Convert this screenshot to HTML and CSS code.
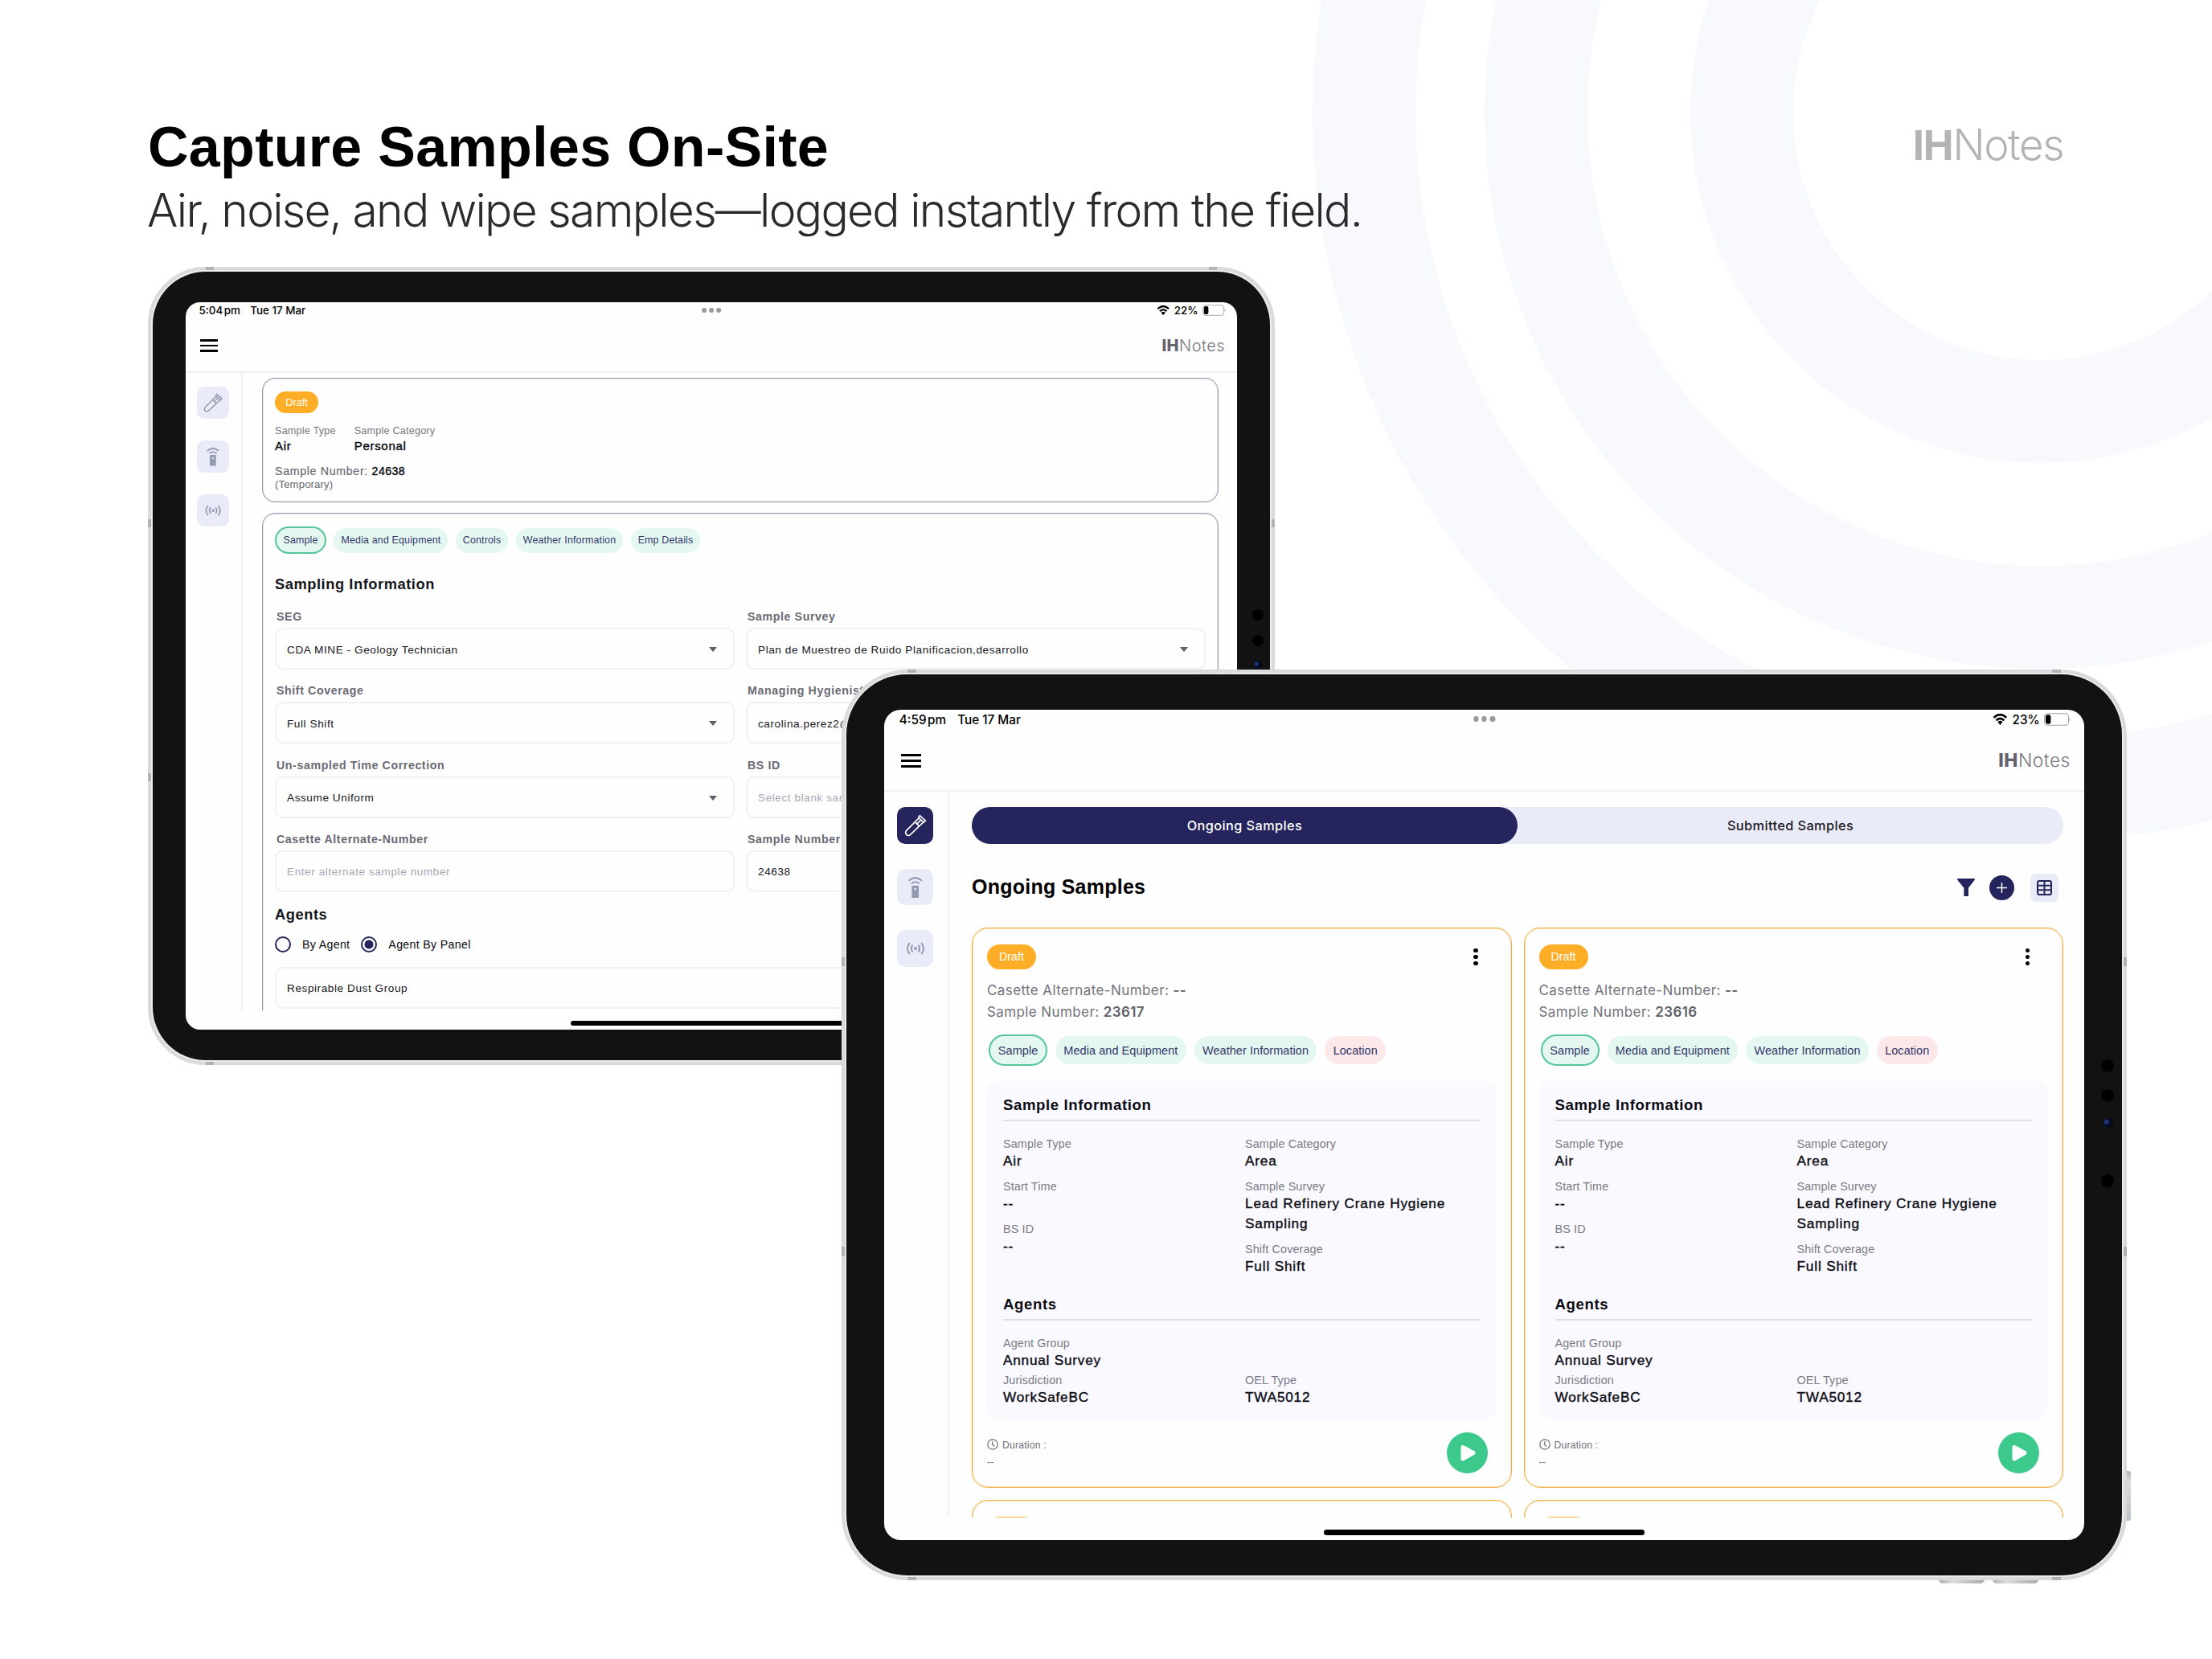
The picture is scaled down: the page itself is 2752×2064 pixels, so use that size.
FILE: index.html
```
<!DOCTYPE html>
<html lang="en">
<head>
    <meta charset="UTF-8">
    <meta name="viewport" content="width=device-width, initial-scale=1.0">
    <title>IHNotes - Capture Samples On-Site</title>
    <link rel="stylesheet" href="styles.css">
</head>
<body>

    <!-- Icon sprite -->
    <svg class="sprite" width="0" height="0">
        <symbol id="tube" viewBox="0 0 137 137">
            <g fill="none" stroke="currentColor" stroke-width="5" stroke-linecap="round" stroke-linejoin="round">
                <path d="M80 43 L35 88 A10.500 10.500 0 0 0 50 103 L96 59"/>
                <path d="M85 32 L106 51 L100 58 L80 39 Z"/>
                <path d="M68 57 L82 71"/>
                <path d="M88 50 L76 62"/>
            </g>
        </symbol>
        <symbol id="remote" viewBox="0 0 137 137">
            <path d="M57 62h22a2 2 0 0 1 2 2v42a2 2 0 0 1-2 2H57a2 2 0 0 1-2-2V64a2 2 0 0 1 2-2zM68 71a4 4 0 1 0 0.010 0z" fill="currentColor" fill-rule="evenodd"/>
            <path d="M46 43Q68 24 91 43M55 54Q68 44 82 54" fill="none" stroke="currentColor" stroke-width="6" stroke-linecap="round"/>
        </symbol>
        <symbol id="signal" viewBox="0 0 137 137">
            <circle cx="69" cy="69" r="6" fill="currentColor"/>
            <path d="M57 58Q50 69 57 80M81 58Q88 69 81 80M46 50Q32 69 46 88M92 50Q106 69 92 88" fill="none" stroke="currentColor" stroke-width="6" stroke-linecap="round"/>
        </symbol>
        <symbol id="wifi" viewBox="0 0 50 38">
            <path d="M4 13Q25 -7 46 13M12 22Q25 9 38 22" fill="none" stroke="currentColor" stroke-width="7"/>
            <path d="M17 27Q25 20 33 27L25 37z" fill="currentColor"/>
        </symbol>
        <symbol id="battery" viewBox="0 0 100 46">
            <rect x="1.500" y="1.500" width="89" height="43" rx="11" fill="none" stroke="#a3a3a3" stroke-width="3"/>
            <rect x="6" y="6" width="19" height="34" rx="7" fill="#000"/>
            <path d="M94 15q6 8 0 16z" fill="#a3a3a3"/>
        </symbol>
        <symbol id="clock" viewBox="0 0 26 26">
            <circle cx="13" cy="13" r="11.500" fill="none" stroke="currentColor" stroke-width="2.200"/>
            <path d="M12.500 6v8l4.500 3.500" fill="none" stroke="currentColor" stroke-width="2.200"/>
        </symbol>
        <symbol id="play" viewBox="0 0 51 51">
            <path d="M20 18.500 L33 25.500 L20 33 Z" fill="#fff" stroke="#fff" stroke-width="5" stroke-linejoin="round"/>
        </symbol>
    </svg>

    <!-- Background rings -->
    <svg class="rings" viewBox="0 0 2752 2064">
        <circle cx="2539" cy="140" r="372"/>
        <circle cx="2539" cy="140" r="628"/>
        <circle cx="2539" cy="140" r="842"/>
    </svg>

    <header class="hero">
        <div>
            <h1>Capture Samples On-Site</h1>
            <p>Air, noise, and wipe samples—logged instantly from the field.</p>
        </div>
        <div class="hero-logo"><b>IH</b>Notes</div>
    </header>

    <!-- Back tablet: sample form -->
    <section class="tablet tablet-back">
        <i class="band band-tl"></i><i class="band band-tr"></i><i class="band band-bl"></i><i class="band band-br"></i>
        <i class="band band-lt"></i><i class="band band-lb"></i><i class="band band-rt"></i><i class="band band-rb"></i>
        <div class="bezel">
            <i class="cam cam-1"></i><i class="cam cam-2"></i><i class="cam lens"></i><i class="cam cam-3"></i>
            <div class="screen">
                <div class="status">
                    <span class="time">5:04<small>&#8201;</small>pm</span><span>Tue 17 Mar</span>
                    <span class="multi"><i></i><i></i><i></i></span>
                    <svg class="wifi"><use href="#wifi"/></svg><span class="pct">22%</span><svg class="battery"><use href="#battery"/></svg>
                </div>
                <div class="topbar">
                    <div class="burger"><i></i><i></i><i></i></div>
                    <div class="logo"><b>IH</b>Notes</div>
                </div>
                <div class="body">
                    <nav class="side">
                        <span><svg><use href="#tube"/></svg></span>
                        <span><svg><use href="#remote"/></svg></span>
                        <span><svg><use href="#signal"/></svg></span>
                    </nav>
                    <main class="form">
                        <div class="box">
                            <span class="draft">Draft</span>
                            <div class="meta">
                                <div><label>Sample Type</label><strong>Air</strong></div>
                                <div><label>Sample Category</label><strong>Personal</strong></div>
                            </div>
                            <div class="number">Sample Number: <strong>24638</strong></div>
                            <div class="temp">(Temporary)</div>
                        </div>
                        <div class="box box-form">
                            <div class="chips">
                                <span class="chip active">Sample</span>
                                <span class="chip">Media and Equipment</span>
                                <span class="chip">Controls</span>
                                <span class="chip">Weather Information</span>
                                <span class="chip">Emp Details</span>
                            </div>
                            <h3>Sampling Information</h3>
                            <div class="fields">
                                <div class="field"><label>SEG</label><div class="input">CDA MINE - Geology Technician<i class="caret"></i></div></div>
                                <div class="field"><label>Sample Survey</label><div class="input">Plan de Muestreo de Ruido Planificacion,desarrollo<i class="caret"></i></div></div>
                                <div class="field"><label>Shift Coverage</label><div class="input">Full Shift<i class="caret"></i></div></div>
                                <div class="field"><label>Managing Hygienist</label><div class="input">carolina.perez2@</div></div>
                                <div class="field"><label>Un-sampled Time Correction</label><div class="input">Assume Uniform<i class="caret"></i></div></div>
                                <div class="field"><label>BS ID</label><div class="input empty">Select blank sample</div></div>
                                <div class="field"><label>Casette Alternate-Number</label><div class="input empty">Enter alternate sample number</div></div>
                                <div class="field"><label>Sample Number</label><div class="input">24638</div></div>
                            </div>
                            <h3 class="agents">Agents</h3>
                            <div class="radios">
                                <i class="radio"></i><span>By Agent</span>
                                <i class="radio on"></i><span>Agent By Panel</span>
                            </div>
                            <div class="input">Respirable Dust Group</div>
                        </div>
                    </main>
                </div>
                <div class="home"></div>
            </div>
        </div>
    </section>

    <!-- Front tablet: sample list -->
    <section class="tablet tablet-front">
        <i class="key key-side"></i><i class="key key-b1"></i><i class="key key-b2"></i>
        <i class="band band-tl"></i><i class="band band-tr"></i><i class="band band-bl"></i><i class="band band-br"></i>
        <i class="band band-lt"></i><i class="band band-lb"></i><i class="band band-rt"></i><i class="band band-rb"></i>
        <div class="bezel">
            <i class="cam cam-1"></i><i class="cam cam-2"></i><i class="cam lens"></i><i class="cam cam-3"></i>
            <div class="screen">
                <div class="status">
                    <span class="time">4:59<small>&#8201;</small>pm</span><span>Tue 17 Mar</span>
                    <span class="multi"><i></i><i></i><i></i></span>
                    <svg class="wifi"><use href="#wifi"/></svg><span class="pct">23%</span><svg class="battery"><use href="#battery"/></svg>
                </div>
                <div class="topbar">
                    <div class="burger"><i></i><i></i><i></i></div>
                    <div class="logo"><b>IH</b>Notes</div>
                </div>
                <div class="body">
                    <nav class="side">
                        <span class="on"><svg><use href="#tube"/></svg></span>
                        <span><svg><use href="#remote"/></svg></span>
                        <span><svg><use href="#signal"/></svg></span>
                    </nav>
                    <main class="list">
                        <div class="tabs"><span class="on">Ongoing Samples</span><span>Submitted Samples</span></div>
                        <div class="heading">
                            <h2>Ongoing Samples</h2>
                            <svg class="filter" viewBox="0 0 66 66"><path d="M3 0h60c3 0 4 3 2 5L42 35v27c0 3-2 4-4 4H28c-2 0-3-1-3-4V35L1 5C-1 3 0 0 3 0z" fill="#25245c"/></svg>
                            <svg class="plus" viewBox="0 0 93 93"><circle cx="46.500" cy="46.500" r="46.500" fill="#25245c"/><path d="M46.500 27v39M27 46.500h39" stroke="#fff" stroke-width="4.500"/></svg>
                            <span class="grid-btn">
                                <svg viewBox="0 0 57 57"><path d="M10 3h37a7 7 0 0 1 7 7v37a7 7 0 0 1-7 7H10a7 7 0 0 1-7-7V10a7 7 0 0 1 7-7zM28.500 3v51M3 20h51M3 37h51" fill="none" stroke="#25245c" stroke-width="6"/></svg>
                            </span>
                        </div>
                        <div class="cards">
                            <article class="card">
                                <div class="card-top"><span class="draft">Draft</span><span class="kebab"><i></i><i></i><i></i></span></div>
                                <div class="ids">Casette Alternate-Number: <b>--</b><br>Sample Number: <b>23617</b></div>
                                <div class="chips">
                                    <span class="chip active">Sample</span><span class="chip">Media and Equipment</span><span class="chip">Weather Information</span><span class="chip red">Location</span>
                                </div>
                                <div class="panel">
                                    <h4>Sample Information</h4>
                                    <div class="cols">
                                        <dl>
                                            <dt>Sample Type</dt><dd>Air</dd>
                                            <dt>Start Time</dt><dd>--</dd>
                                            <dt>BS ID</dt><dd>--</dd>
                                        </dl>
                                        <dl>
                                            <dt>Sample Category</dt><dd>Area</dd>
                                            <dt>Sample Survey</dt><dd>Lead Refinery Crane Hygiene Sampling</dd>
                                            <dt>Shift Coverage</dt><dd>Full Shift</dd>
                                        </dl>
                                    </div>
                                    <h4>Agents</h4>
                                    <dl class="tight"><dt>Agent Group</dt><dd>Annual Survey</dd></dl>
                                    <div class="cols last">
                                        <dl class="tight"><dt>Jurisdiction</dt><dd>WorkSafeBC</dd></dl>
                                        <dl class="tight"><dt>OEL Type</dt><dd>TWA5012</dd></dl>
                                    </div>
                                </div>
                                <div class="card-foot">
                                    <div class="duration"><svg><use href="#clock"/></svg>Duration :<br>--</div>
                                    <span class="play"><svg><use href="#play"/></svg></span>
                                </div>
                            </article>
                            <article class="card">
                                <div class="card-top"><span class="draft">Draft</span><span class="kebab"><i></i><i></i><i></i></span></div>
                                <div class="ids">Casette Alternate-Number: <b>--</b><br>Sample Number: <b>23616</b></div>
                                <div class="chips">
                                    <span class="chip active">Sample</span><span class="chip">Media and Equipment</span><span class="chip">Weather Information</span><span class="chip red">Location</span>
                                </div>
                                <div class="panel">
                                    <h4>Sample Information</h4>
                                    <div class="cols">
                                        <dl>
                                            <dt>Sample Type</dt><dd>Air</dd>
                                            <dt>Start Time</dt><dd>--</dd>
                                            <dt>BS ID</dt><dd>--</dd>
                                        </dl>
                                        <dl>
                                            <dt>Sample Category</dt><dd>Area</dd>
                                            <dt>Sample Survey</dt><dd>Lead Refinery Crane Hygiene Sampling</dd>
                                            <dt>Shift Coverage</dt><dd>Full Shift</dd>
                                        </dl>
                                    </div>
                                    <h4>Agents</h4>
                                    <dl class="tight"><dt>Agent Group</dt><dd>Annual Survey</dd></dl>
                                    <div class="cols last">
                                        <dl class="tight"><dt>Jurisdiction</dt><dd>WorkSafeBC</dd></dl>
                                        <dl class="tight"><dt>OEL Type</dt><dd>TWA5012</dd></dl>
                                    </div>
                                </div>
                                <div class="card-foot">
                                    <div class="duration"><svg><use href="#clock"/></svg>Duration :<br>--</div>
                                    <span class="play"><svg><use href="#play"/></svg></span>
                                </div>
                            </article>
                            <article class="card next"><span class="draft"></span></article>
                            <article class="card next"><span class="draft"></span></article>
                        </div>
                    </main>
                </div>
                <div class="home"></div>
            </div>
        </div>
    </section>

</body>
</html>
```
FILE: styles.css
```
/* General */
* {
    box-sizing: border-box;
}
body {
    position: relative;
    margin: 0;
    width: 2752px;
    height: 2064px;
    overflow: hidden;
    background: #fff;
    font-family: "Liberation Sans", Arial, sans-serif;
    color: #0c0c14;
}
h1, h2, h3, h4, p, dl, dd {
    margin: 0;
}
i {
    display: block;
}
.sprite {
    position: absolute;
}

/* Background rings */
.rings {
    position: absolute;
    top: 0;
    left: 0;
    width: 2752px;
    height: 2064px;
}
.rings circle {
    fill: none;
    stroke: #f8f9fd;
    stroke-width: 128;
}

/* Title */
.hero {
    position: relative;
    display: flex;
    justify-content: space-between;
    padding: 142px 185px 0 183px;
}
.hero h1 {
    margin-left: 1px;
    font-size: 70px;
    line-height: 82px;
    letter-spacing: 0.300px;
    color: #000;
}
.hero p {
    font-family: Inter, sans-serif;
    font-weight: 300;
    font-size: 57px;
    line-height: 76px;
    letter-spacing: -1.720px;
    color: #2b2b2b;
    white-space: nowrap;
}
.hero-logo {
    font-family: Inter, sans-serif;
    font-weight: 300;
    font-size: 53px;
    line-height: 76px;
    letter-spacing: -1.500px;
    color: #b4b4b4;
}
.hero-logo b {
    font-family: "Liberation Sans", sans-serif;
    font-weight: 700;
}

/* Tablet frame, 1em = 10px on the back one */
.tablet {
    position: absolute;
    border: 4px solid #d9dada;
    border-radius: 7.200em;
    padding: 2px;
    background: #ececec;
}
.tablet-back {
    left: 184px;
    top: 332px;
    width: 1402px;
    height: 993px;
    font-size: 10px;
}
.tablet-front {
    left: 1047px;
    top: 833px;
    width: 1599px;
    height: 1133px;
    font-size: 11.410px;
}
.bezel {
    position: relative;
    height: 100%;
    border-radius: 6.600em;
    background: #121212;
    padding: 38px 41px 38px 41px;
}
.tablet-front .bezel {
    padding: 44px 47px;
}
.screen {
    position: relative;
    display: flex;
    flex-direction: column;
    height: 100%;
    border-radius: 1.800em;
    background: #fefefe;
    overflow: hidden;
}
.band {
    position: absolute;
    background: #b1b2b4;
}
.band-tl, .band-tr, .band-bl, .band-br {
    width: 1em;
    height: 4px;
}
.band-tl, .band-tr {
    top: -4px;
}
.band-bl, .band-br {
    bottom: -4px;
}
.band-tl, .band-bl {
    left: 6.800em;
}
.band-tr, .band-br {
    right: 6.800em;
}
.band-lt, .band-lb, .band-rt, .band-rb {
    width: 4px;
    height: 1em;
}
.band-lt, .band-rt {
    top: 31em;
}
.band-lb, .band-rb {
    top: 62.600em;
}
.band-lt, .band-lb {
    left: -4px;
}
.band-rt, .band-rb {
    right: -4px;
}
.cam {
    position: absolute;
    right: 0.850em;
    width: 1.400em;
    height: 1.400em;
    border-radius: 50%;
    background: #000;
}
.cam-1 {
    top: 41.950em;
}
.cam-2 {
    top: 45.200em;
}
.cam-3 {
    top: 54.500em;
}
.lens {
    top: 48.400em;
    right: 1em;
    width: 1em;
    height: 1em;
    background: radial-gradient(circle at 30% 40%, #1f3a86 0 12%, #0a0f2c 38%, #05060e 75%);
}
.key {
    position: absolute;
    z-index: -1;
    background: linear-gradient(90deg, #a9abac, #dcdddd 30%, #c4c5c5 60%, #a9abac);
}
.key-side {
    top: 993px;
    right: -9px;
    width: 8px;
    height: 62px;
    border-radius: 3px;
    background: linear-gradient(180deg, #a9abac, #dcdddd 20%, #b9bfc5);
}
.key-b1, .key-b2 {
    bottom: -8px;
    width: 57px;
    height: 8px;
    border-radius: 0 0 5px 5px;
}
.key-b1 {
    right: 173px;
}
.key-b2 {
    right: 106px;
}

/* Status bar */
.status {
    flex: none;
    display: flex;
    align-items: center;
    height: 2em;
    padding: 0 1.400em 0 1.650em;
    font-family: Inter, sans-serif;
    font-weight: 500;
    color: #000;
}
.tablet-front .status {
    padding-top: 2px;
}
.status span {
    font-size: 1.340em;
    white-space: nowrap;
}
.status .time {
    margin-right: 0.920em;
}
.time small {
    font-size: 0.600em;
}
.status .multi {
    position: absolute;
    left: 50%;
    top: 0.700em;
    display: flex;
    gap: 0.320em;
    font-size: 1em;
    transform: translateX(-50%);
}
.multi i {
    width: 0.580em;
    height: 0.580em;
    border-radius: 50%;
    background: #999;
}
.wifi {
    width: 1.650em;
    height: 1.250em;
    margin-left: auto;
}
.status .pct {
    margin: 0 0.370em;
}
.battery {
    width: 2.950em;
    height: 1.400em;
}

/* App bar */
.topbar {
    flex: none;
    display: flex;
    align-items: center;
    justify-content: space-between;
    height: 6.800em;
    padding: 2px 1.500em 0 1.800em;
    border-bottom: 2px solid #f0f0f2;
}
.tablet-front .topbar {
    height: 79px;
    padding-top: 4px;
}
.burger {
    display: flex;
    flex-direction: column;
    gap: 0.370em;
}
.burger i {
    width: 2.200em;
    height: 0.260em;
    background: #000;
}
.logo {
    font-family: Inter, sans-serif;
    font-weight: 300;
    font-size: 2em;
    letter-spacing: 0.022em;
    color: #777780;
}
.logo b {
    font-weight: 800;
    color: #63636e;
}
.body {
    flex: 1;
    display: flex;
    min-height: 0;
    margin-bottom: 2.450em;
    overflow: hidden;
}
.side {
    flex: none;
    display: flex;
    flex-direction: column;
    align-items: center;
    gap: 2.700em;
    width: 7.100em;
    padding: 1.700em 0.200em 0 0;
    border-right: 2px solid #f1f1f3;
}
.side span {
    width: 4em;
    height: 4em;
    border-radius: 0.900em;
    background: #eaebf8;
    color: #949bb0;
}
.side .on {
    background: #25245c;
    color: #fff;
}
.side svg {
    display: block;
    width: 100%;
    height: 100%;
}
.home {
    position: absolute;
    bottom: 0.500em;
    left: 50%;
    width: 35em;
    height: 0.650em;
    margin-left: -17.500em;
    border-radius: 1em;
    background: #000;
}

/* Shared pills */
.draft {
    display: flex;
    align-items: center;
    justify-content: center;
    background: #feae26;
    color: #fff;
}
.chips {
    display: flex;
    align-items: center;
}
.chip {
    display: flex;
    align-items: center;
    background: #e4f8f1;
    color: #33376b;
    white-space: nowrap;
}
.chip.active {
    border: 2px solid #55c698;
}
.chip.red {
    background: #fde8e9;
}

/* Sample form */
.form {
    flex: 1;
    padding: 6px 23px 0 24px;
}
.form .box {
    height: 155px;
    padding: 16px 15px;
    border: 1px solid #9299ab;
    border-radius: 16px;
    box-shadow: inset 0 0 0 1px rgba(146, 153, 171, 0.250);
}
.form .box-form {
    height: 700px;
    margin-top: 13px;
}
.form .draft {
    width: 54px;
    height: 27px;
    border-radius: 14px;
    font-size: 12.700px;
}
.meta {
    display: flex;
    gap: 23px;
    margin-top: 14px;
}
.meta label {
    display: block;
    font-size: 12.700px;
    line-height: 16px;
    letter-spacing: 0.170px;
    color: #787881;
}
.meta strong, .number strong, dd {
    font-weight: 400;
    -webkit-text-stroke: 0.400px currentColor;
}
.meta strong {
    display: block;
    font-size: 15px;
    line-height: 21px;
    letter-spacing: 0.700px;
}
.number {
    margin-top: 13px;
    font-size: 14.200px;
    line-height: 17px;
    letter-spacing: 0.680px;
    color: #6a6a74;
    -webkit-text-stroke: 0.200px currentColor;
}
.number strong {
    letter-spacing: 0.400px;
    color: #0c0c14;
}
.temp {
    font-size: 13.200px;
    line-height: 15px;
    letter-spacing: 0.100px;
    color: #6a6a74;
}
.form .chips {
    gap: 9.400px;
}
.form .chip {
    height: 31px;
    padding: 0 9px;
    border-radius: 16px;
    font-size: 12.400px;
    letter-spacing: 0.180px;
}
.form .chip.active {
    height: 34px;
    padding: 0 8.500px;
    border-radius: 17px;
}
.form h3 {
    margin-top: 26px;
    font-size: 18.300px;
    line-height: 24px;
    letter-spacing: 0.550px;
    color: #15151c;
}
.fields {
    display: grid;
    grid-template-columns: 1fr 1fr;
    gap: 16.300px 14px;
    margin-top: 18px;
}
.field label {
    display: block;
    padding-left: 2px;
    margin-bottom: 4px;
    font-size: 14.200px;
    font-weight: 700;
    line-height: 20px;
    letter-spacing: 0.600px;
    color: #6a6a74;
}
.input {
    display: flex;
    align-items: center;
    justify-content: space-between;
    height: 52px;
    padding: 2px 20px 0 13px;
    border: 2px solid #f0f0f9;
    border-radius: 10px;
    font-size: 13.600px;
    letter-spacing: 0.570px;
    color: #17171d;
}
.input.empty {
    color: #a6a8b6;
}
.caret {
    border: 5.500px solid transparent;
    border-top: 6px solid #5f5f6b;
    border-bottom: 0;
}
.form h3.agents {
    margin-top: 16px;
}
.radios {
    display: flex;
    align-items: center;
    height: 20px;
    margin: 15px 0 18px;
    font-size: 14.200px;
    letter-spacing: 0.320px;
}
.radios span {
    margin: 0 14px;
}
.radio {
    width: 20px;
    height: 20px;
    border: 2.500px solid #25245c;
    border-radius: 50%;
}
.radio.on {
    background: radial-gradient(circle, #25245c 0 5.200px, #fff 5.800px);
}

/* Sample list */
.list {
    flex: 1;
    padding: 19px 26px 0 28px;
}
.tabs {
    display: flex;
    height: 46px;
    border-radius: 23px;
    background: #eaebf8;
}
.tabs span {
    flex: 1;
    display: flex;
    align-items: center;
    justify-content: center;
    border-radius: 23px;
    font-family: Inter, sans-serif;
    font-weight: 500;
    font-size: 16.300px;
    letter-spacing: 0.420px;
    color: #1a1a22;
}
.tabs .on {
    background: #25245c;
    color: #fff;
}
.heading {
    display: flex;
    align-items: center;
    height: 35px;
    margin-top: 37px;
    padding-right: 6px;
}
.heading h2 {
    flex: 1;
    padding-bottom: 3px;
    font-size: 25px;
    line-height: 32px;
    letter-spacing: 0.250px;
    color: #000;
}
.filter {
    width: 22px;
    height: 22px;
}
.plus {
    width: 31px;
    height: 31px;
    margin: 0 20px 0 18px;
}
.grid-btn {
    display: flex;
    align-items: center;
    justify-content: center;
    width: 35px;
    height: 35px;
    border-radius: 7px;
    background: #eaebf8;
}
.grid-btn svg {
    width: 19px;
    height: 19px;
}
.cards {
    display: grid;
    grid-template-columns: 1fr 1fr;
    gap: 15px;
    margin-top: 32px;
}
.card {
    height: 697px;
    padding: 20px 18px 0;
    border: 1px solid #f2ae42;
    border-radius: 20px;
    box-shadow: inset 0 0 0 1px rgba(246, 184, 80, 0.400);
}
.card-top {
    display: flex;
    align-items: center;
    justify-content: space-between;
}
.list .draft {
    width: 61px;
    height: 31px;
    border-radius: 16px;
    font-size: 14.300px;
}
.kebab {
    display: flex;
    flex-direction: column;
    gap: 2.500px;
    margin-right: 23px;
}
.kebab i {
    width: 5.500px;
    height: 5.500px;
    border-radius: 50%;
    background: #000;
}
.ids {
    margin-top: 13px;
    font-family: Inter, sans-serif;
    font-size: 17px;
    line-height: 26.700px;
    letter-spacing: 0.400px;
    color: #73737c;
}
.ids b {
    font-weight: 600;
    color: #5f5f69;
}
.list .chips {
    gap: 10px;
    margin: 15px 0 19px 2px;
}
.list .chip {
    height: 35px;
    padding: 0 10.300px;
    border-radius: 18px;
    font-size: 14.500px;
    letter-spacing: 0.050px;
}
.list .chip.active {
    height: 39px;
    padding: 0 9.800px;
    border-radius: 20px;
}
.panel {
    height: 421px;
    padding: 17.500px 20px 0;
    border-radius: 14px;
    background: #faf9ff;
}
.panel h4 {
    padding-bottom: 6px;
    margin-bottom: 19px;
    border-bottom: 2px solid #dfdfe6;
    font-size: 18.600px;
    line-height: 24px;
    letter-spacing: 0.600px;
}
.cols {
    display: grid;
    grid-template-columns: 301px 1fr;
    height: 197px;
}
.cols.last {
    height: auto;
    margin-top: 2.500px;
}
dt {
    font-size: 14.400px;
    line-height: 18px;
    letter-spacing: 0.120px;
    color: #7b7b85;
}
dd {
    margin-bottom: 9.600px;
    font-size: 17.200px;
    line-height: 25.400px;
    letter-spacing: 0.840px;
}
.tight dd {
    margin-bottom: 0;
    letter-spacing: 0.780px;
}
.card-foot {
    display: flex;
    justify-content: space-between;
    margin-top: 16px;
    padding-right: 11px;
}
.duration {
    padding-top: 6px;
    font-size: 12.200px;
    line-height: 21px;
    letter-spacing: 0.200px;
    color: #6f6f79;
}
.duration svg {
    width: 14px;
    height: 14px;
    margin-right: 5px;
    vertical-align: -1.500px;
}
.play {
    width: 51px;
    height: 51px;
    border-radius: 50%;
    background: #3dc98b;
}
.play svg {
    width: 51px;
    height: 51px;
}
```
